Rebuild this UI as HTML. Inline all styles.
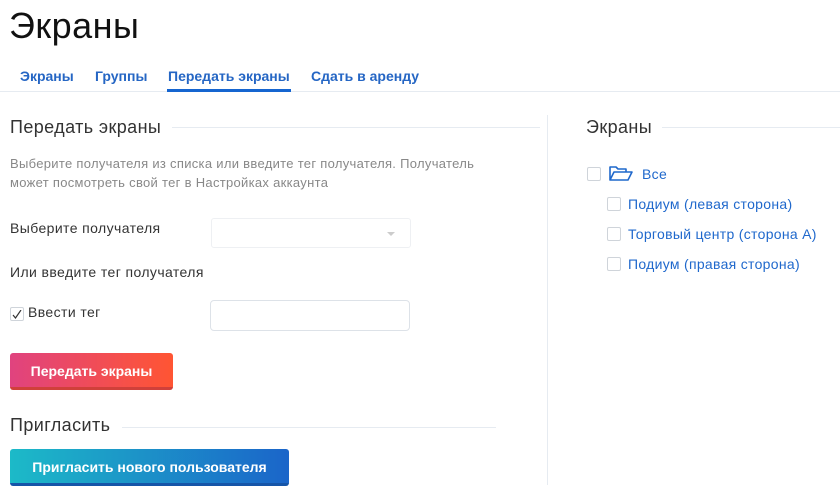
<!DOCTYPE html>
<html><head><meta charset="utf-8"><style>
body{margin:0;width:840px;height:496px;background:#fff;font-family:"Liberation Sans","DejaVu Sans",sans-serif;position:relative;overflow:hidden;color:#333}
.a{position:absolute;white-space:nowrap}
.tab{font-size:14px;font-weight:bold;color:#2566c4;top:68px}
.h{font-size:18px;color:#333;letter-spacing:0.4px}
.line{position:absolute;height:1px;background:#e6ebf1}
.cb{position:absolute;width:12px;height:12px;border:1px solid #cfd4da;border-radius:2px;background:#fff}
.lk{font-size:14px;color:#1f68cc;letter-spacing:0.3px}
.t{font-size:14px;letter-spacing:0.4px}
.btn{position:absolute;height:37px;border-radius:3px;color:#fff;font-weight:bold;font-size:14px;text-align:center;line-height:36px;box-sizing:border-box}
</style></head><body>
<div class="a" style="left:9px;top:5px;font-size:36px;color:#111;letter-spacing:0.5px">Экраны</div>
<div class="a tab" style="left:20px">Экраны</div>
<div class="a tab" style="left:95px">Группы</div>
<div class="a tab" style="left:168px">Передать экраны</div>
<div class="a tab" style="left:311px">Сдать в аренду</div>
<div class="line" style="left:0;top:91px;width:840px"></div>
<div style="position:absolute;left:167px;top:89px;width:124px;height:3px;background:#1565d0"></div>

<div class="a h" style="left:10px;top:117px">Передать экраны</div>
<div class="line" style="left:172px;top:127px;width:368px"></div>
<div style="position:absolute;left:547px;top:115px;width:1px;height:370px;background:#e6ebf1"></div>
<div class="a" style="left:10px;top:154px;font-size:13px;color:#888;line-height:19px;letter-spacing:0.3px">Выберите получателя из списка или введите тег получателя. Получатель<br>может посмотреть свой тег в Настройках аккаунта</div>
<div class="a t" style="left:10px;top:220px">Выберите получателя</div>
<div style="position:absolute;left:211px;top:218px;width:198px;height:28px;border:1px solid #eef0f3;border-radius:3px"></div>
<div style="position:absolute;left:387px;top:232px;border-left:4px solid transparent;border-right:4px solid transparent;border-top:4px solid #ccc"></div>
<div class="a t" style="left:10px;top:264px">Или введите тег получателя</div>
<div class="cb" style="left:10px;top:307px"></div>
<svg style="position:absolute;left:12px;top:310px" width="10" height="9" viewBox="0 0 10 9"><path d="M1 5l2.5 3L9 0" fill="none" stroke="#333" stroke-width="1.2"/></svg>
<div class="a t" style="left:28px;top:304px">Ввести тег</div>
<div style="position:absolute;left:210px;top:300px;width:198px;height:29px;border:1px solid #dde2e8;border-radius:4px"></div>
<div class="btn" style="left:10px;top:353px;width:163px;background:linear-gradient(90deg,#e0437f,#ff5533);border-bottom:3px solid #d0403a">Передать экраны</div>
<div class="a h" style="left:10px;top:415px">Пригласить</div>
<div class="line" style="left:122px;top:427px;width:374px"></div>
<div class="btn" style="left:10px;top:449px;width:279px;background:linear-gradient(90deg,#1cbac8,#1b65c9);border-bottom:3px solid #1655a8">Пригласить нового пользователя</div>

<div class="a h" style="left:586px;top:117px">Экраны</div>
<div class="line" style="left:662px;top:127px;width:178px"></div>
<div class="cb" style="left:587px;top:167px"></div>
<svg style="position:absolute;left:609px;top:165px" width="24" height="17" viewBox="0 0 24 17"><path d="M1 15V2h6l2 2h8v3M1 15l4-8h18l-4 8z" fill="none" stroke="#1f68cc" stroke-width="1.6" stroke-linejoin="round"/></svg>
<div class="a lk" style="left:642px;top:166px">Все</div>
<div class="cb" style="left:607px;top:197px"></div>
<div class="a lk" style="left:628px;top:196px">Подиум (левая сторона)</div>
<div class="cb" style="left:607px;top:227px"></div>
<div class="a lk" style="left:628px;top:226px">Торговый центр (сторона А)</div>
<div class="cb" style="left:607px;top:257px"></div>
<div class="a lk" style="left:628px;top:256px">Подиум (правая сторона)</div>
</body></html>
